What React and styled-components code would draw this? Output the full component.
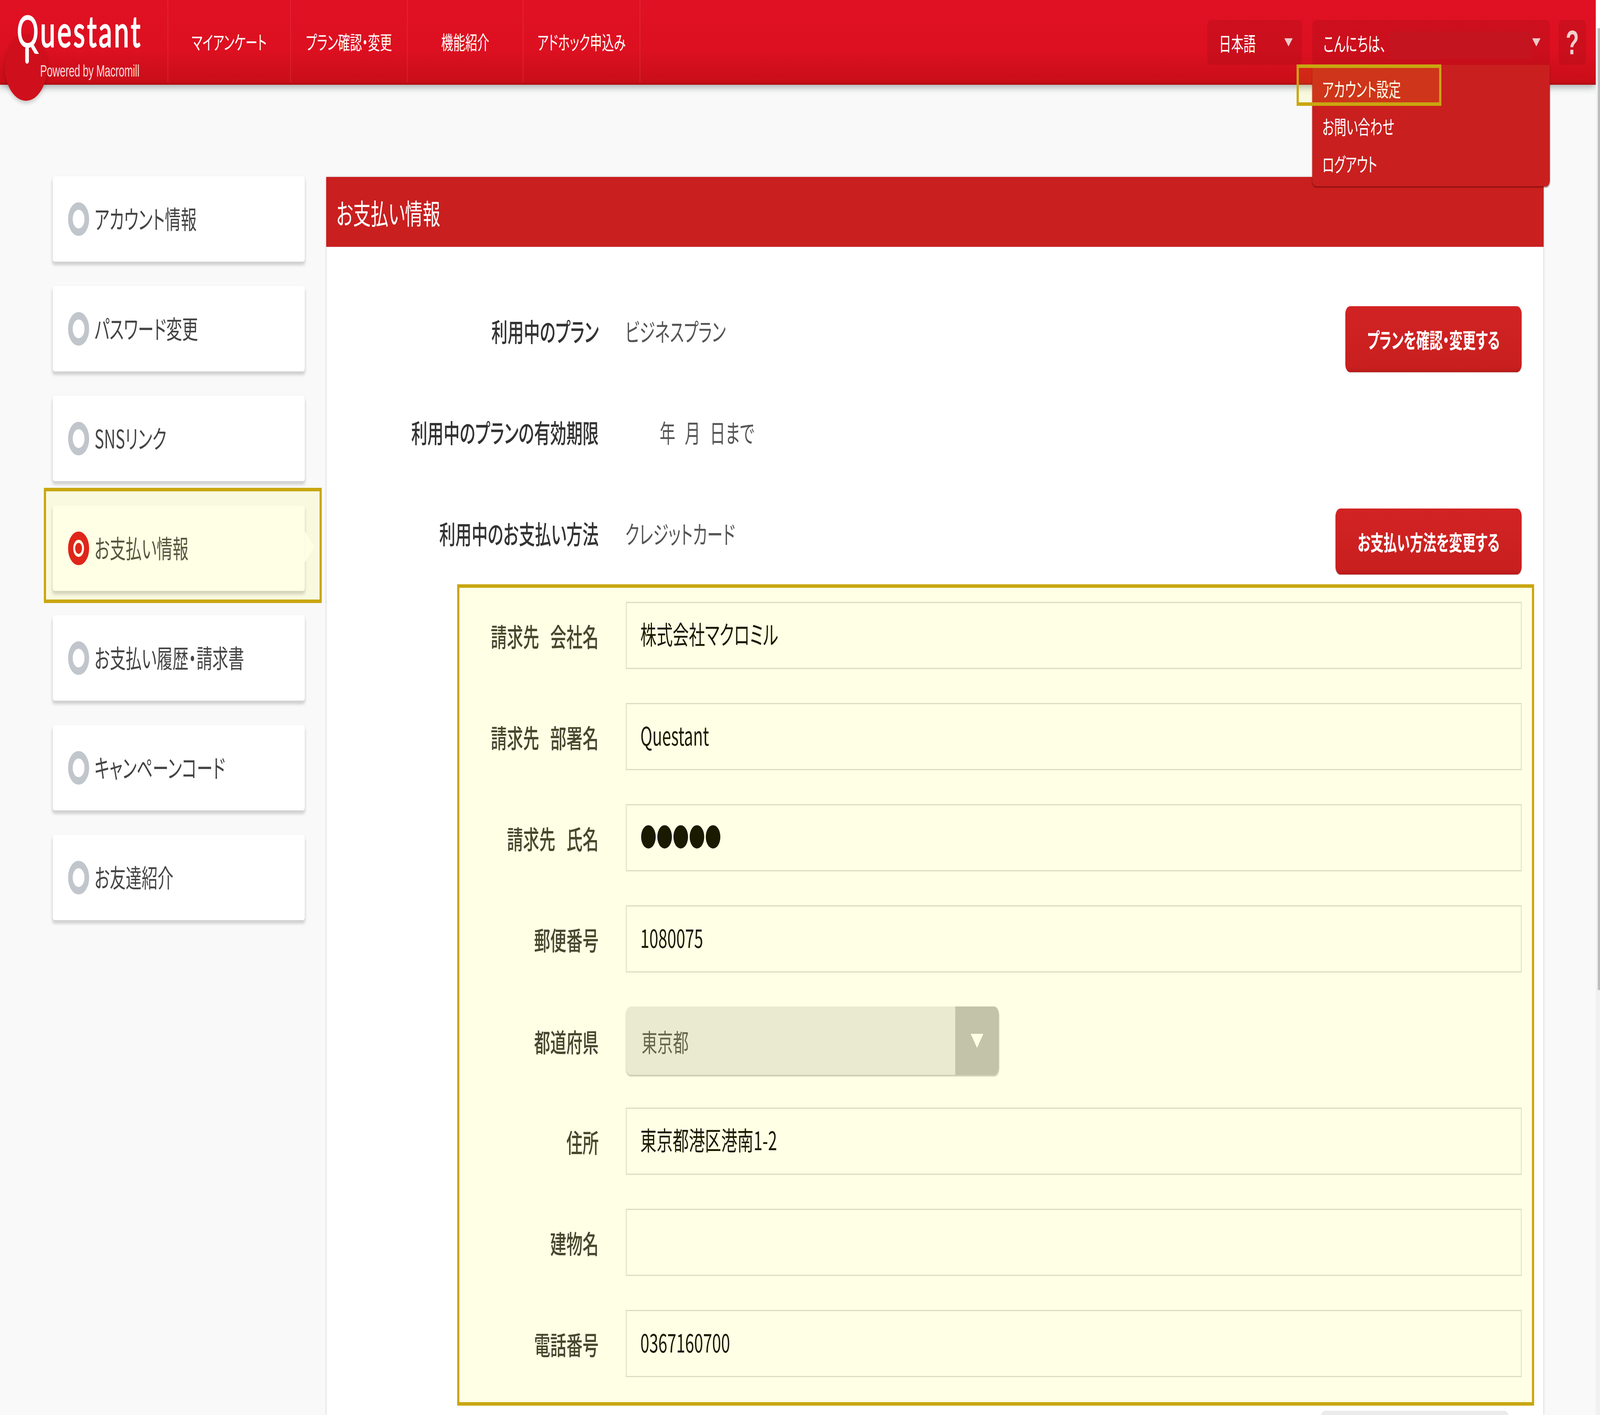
import React from 'react';
import styled, { createGlobalStyle } from 'styled-components';

const cjk = `"Noto Sans CJK JP", "Noto Sans", sans-serif`;
const DESIGN_WIDTH = 6534;

const Global = createGlobalStyle`
  html, body { margin: 0; padding: 0; background: #f9f9f9; overflow: hidden; }
  * { box-sizing: border-box; }
  body { font-family: ${cjk}; font-feature-settings: "palt"; }
`;

const Stage = styled.div`
  width: 100vw;
  height: 100vh;
  overflow: hidden;
`;
// the browser window can come out narrower than the 6534px design, see fitX below
const Screen = styled.div`
  display: flex;
  width: ${DESIGN_WIDTH}px;
  height: 3623px;
  overflow: hidden;
  transform-origin: left top;
`;
const Viewport = styled.div`
  width: 6517px;
  height: 3623px;
  overflow: hidden;
  display: flex;
  flex-direction: column;
`;
const ScrollTrack = styled.div`
  width: 17px;
  background: linear-gradient(#fff 72px, #f1f1f1 72px);
  padding: 72px 0 0 8px;
`;
const ScrollThumb = styled.div`
  height: 2463px;
  background: #bdbdbd;
`;

/* header */
const Header = styled.header`
  position: relative;
  z-index: 5;
  flex: none;
  height: 217px;
  display: flex;
  background: linear-gradient(#e01123, #dc1020 60%, #c90e18 97%, #a90d12);
  box-shadow: 0 6px 22px rgba(60, 70, 70, 0.45);
  &::before {
    content: "";
    position: absolute;
    left: 20px;
    top: 86px;
    width: 172px;
    height: 172px;
    border-radius: 50%;
    background: #cf101c;
    box-shadow: 0 6px 14px rgba(0, 0, 0, 0.2);
    z-index: -1;
  }
`;
const Logo = styled.div`
  width: 684px;
  flex: none;
  padding: 18px 0 0 69px;
  color: #fff;
  position: relative;
`;
const LogoName = styled.div`
  font-family: Lato, sans-serif;
  font-size: 110px;
  line-height: 118px;
  font-weight: 400;
  letter-spacing: 8px;
  -webkit-text-stroke: 3px #fff;
  &::after {
    content: "";
    position: absolute;
    left: 103px;
    top: 118px;
    width: 15px;
    height: 45px;
    background: #fff;
    border-radius: 7px;
  }
`;
const LogoSub = styled.div`
  font-family: "Liberation Sans", Arial, sans-serif;
  font-size: 42px;
  line-height: 44px;
  margin: 24px 0 0 95px;
  letter-spacing: -0.4px;
  color: rgba(255, 255, 255, 0.85);
  white-space: nowrap;
`;
const Nav = styled.nav`
  display: flex;
  border-left: 3px solid rgba(255, 255, 255, 0.1);
  height: 210px;
`;
const NavItem = styled.a`
  width: ${p => p.$w}px;
  display: flex;
  align-items: center;
  justify-content: center;
  color: #fff;
  font-size: 49px;
  border-right: 3px solid rgba(255, 255, 255, 0.1);
  white-space: nowrap;
`;
const HeaderRight = styled.div`
  margin-left: auto;
  display: flex;
  padding: 51px 40px 0 0;
  align-items: flex-start;
`;
const DarkBox = styled.div`
  position: relative;
  height: 115px;
  background: rgba(120, 10, 10, 0.16);
  border-radius: 14px;
  display: flex;
  align-items: center;
  color: #fff;
  font-size: 50px;
  white-space: nowrap;
`;
const LangBox = styled(DarkBox)`
  width: 387px;
  padding: 0 38px 0 48px;
  margin-right: 42px;
`;
const UserBox = styled(DarkBox)`
  width: 970px;
  padding: 0 38px 0 45px;
  margin-right: 36px;
  border-radius: 14px 14px 0 0;
`;
const HelpBox = styled(DarkBox)`
  width: 112px;
  justify-content: center;
  font-family: "Liberation Sans", Arial, sans-serif;
  font-weight: 700;
  font-size: 88px;
  color: #f3cfcf;
`;
const Caret = styled.span`
  margin-left: auto;
  width: 0;
  height: 0;
  border-left: 17px solid transparent;
  border-right: 17px solid transparent;
  border-top: 21px solid #ecc9c9;
`;
const Redacted = styled.span`
  width: 584px;
  height: 69px;
  margin-left: 12px;
  margin-top: 14px;
  background: #c31420;
`;
const Dropdown = styled.ul`
  position: absolute;
  top: 115px;
  left: 0;
  width: 970px;
  margin: 0;
  padding: 12px 0 11px;
  list-style: none;
  background: #c91f1f;
  border-radius: 0 0 16px 16px;
  box-shadow: 0 3px 3px rgba(90, 0, 0, 0.55);
`;
const MenuItem = styled.li`
  height: 96px;
  padding-left: 41px;
  line-height: 96px;
  font-size: 50px;
  color: #fff;
`;
const Highlight = styled.span`
  position: absolute;
  border: 9px solid #c9a711;
  background: rgba(255, 255, 0, 0.1);
  pointer-events: none;
`;
const MenuHighlight = styled(Highlight)`
  left: -64px;
  top: -1px;
  width: 591px;
  height: 106px;
`;

/* page body */
const Content = styled.div`
  flex: 1;
  display: flex;
  min-height: 0;
`;
const Sidebar = styled.aside`
  width: 1334px;
  flex: none;
  padding: 234px 89px 0 215px;
  display: flex;
  flex-direction: column;
  gap: 62px;
`;
const SideItem = styled.div`
  position: relative;
  height: 219px;
  display: flex;
  align-items: center;
  gap: 22px;
  padding: 0 0 6px 63px;
  background: #fff;
  border-radius: 8px;
  box-shadow: 0 9px 9px rgba(0, 0, 0, 0.16), 0 0 3px rgba(0, 0, 0, 0.08);
  font-size: 65px;
  color: #444;
  white-space: nowrap;
`;
const SideArrow = styled.span`
  position: absolute;
  left: 100%;
  top: 66px;
  width: 0;
  height: 0;
  border-top: 40px solid transparent;
  border-bottom: 40px solid transparent;
  border-left: 38px solid #fff;
`;
const SideHighlight = styled(Highlight)`
  inset: -45px -69px -31px -36px;
`;
const Radio = styled.span`
  position: relative;
  flex: none;
  width: 86px;
  height: 86px;
  margin-top: 6px;
  border-radius: 50%;
  border: ${p => (p.$on ? '21px solid #dd0d1e' : '19px solid #c0c6cb')};
  background: #fff;
  &::after {
    content: "";
    display: ${p => (p.$on ? 'block' : 'none')};
    position: absolute;
    left: 8px;
    top: 8px;
    width: 28px;
    height: 28px;
    border-radius: 50%;
    background: #dd0d1e;
  }
`;
const Panel = styled.main`
  width: 4968px;
  flex: none;
  margin-top: 236px;
  background: #fff;
  box-shadow: 0 0 7px rgba(0, 0, 0, 0.18);
`;
const PanelTitle = styled.h1`
  margin: 0 -2px;
  height: 179px;
  padding-left: 41px;
  background: #c91f1f;
  color: #fff;
  font-size: 72px;
  font-weight: 400;
  line-height: 180px;
`;
const InfoList = styled.div`
  padding: 128px 88px 0 0;
  display: flex;
  flex-direction: column;
  gap: 87px;
`;
const InfoRow = styled.div`
  height: 172px;
  display: grid;
  grid-template-columns: 1111px 108px 1fr auto;
  grid-template-rows: 172px;
  align-items: center;
`;
const RowLabel = styled.div`
  text-align: right;
  font-size: 66px;
  font-weight: 500;
  color: #333;
  white-space: pre;
  word-spacing: 30px;
`;
const RowValue = styled.div`
  grid-column: 3;
  font-size: 64px;
  color: #555;
  margin-left: ${p => p.$indent || 0}px;
  word-spacing: 24px;
`;
const RedButton = styled.button`
  grid-column: 4;
  align-self: start;
  margin-top: 24px;
  height: 169px;
  width: ${p => p.$w}px;
  border: 0;
  padding: 0;
  border-radius: 20px;
  background: linear-gradient(#d22323, #c91f1f 92%, #b81a1a);
  box-shadow: 0 1px 2px rgba(0, 0, 0, 0.2);
  color: #fff;
  font-family: ${cjk};
  font-feature-settings: "palt";
  font-size: 54px;
  font-weight: 700;
  white-space: nowrap;
`;
const FormBox = styled.section`
  position: relative;
  margin: 46px 37px 0 533px;
  height: 2103px;
  border: 9px solid #c9a711;
  padding: 36px 42px 0 0;
  display: flex;
  flex-direction: column;
  gap: 87px;
  &::after {
    content: "";
    position: absolute;
    inset: 0;
    background: rgba(255, 255, 0, 0.1);
    pointer-events: none;
  }
`;
const FormRow = styled.div`
  height: 172px;
  display: grid;
  grid-template-columns: 569px 1fr;
  column-gap: 111px;
  align-items: center;
`;
const TextInput = styled.input`
  height: 172px;
  width: 100%;
  padding: 0 0 12px 56px;
  border: 3px solid #d8d8d8;
  border-radius: 0;
  background: #fff;
  color: #000;
  font-family: ${cjk};
  font-feature-settings: "palt";
  font-size: 66px;
  outline: none;
`;
const SelectBox = styled.div`
  height: 175px;
  width: 1523px;
  display: flex;
  align-items: center;
  justify-content: space-between;
  padding-left: 64px;
  border-radius: 20px;
  overflow: hidden;
  background: #e8e8e8;
  box-shadow: 0 4px 3px rgba(0, 0, 0, 0.22);
  color: #555;
  font-size: 64px;
`;
const SelectArrow = styled.span`
  width: 178px;
  height: 100%;
  background: #bdbdbd;
  display: flex;
  align-items: center;
  justify-content: center;
  &::before {
    content: "";
    border-left: 26px solid transparent;
    border-right: 26px solid transparent;
    border-top: 36px solid #fff;
  }
`;
const CutButton = styled.div`
  margin: 13px 138px 0 auto;
  width: 773px;
  height: 100px;
  background: #ebebeb;
  border-radius: 22px 22px 0 0;
`;

const navs = [
  ['マイアンケート', 501],
  ['プラン確認・変更', 477],
  ['機能紹介', 473],
  ['アドホック申込み', 477],
];
const sides = ['アカウント情報', 'パスワード変更', 'SNSリンク', 'お支払い情報', 'お支払い履歴・請求書', 'キャンペーンコード', 'お友達紹介'];
const fields = [
  ['請求先 会社名', '株式会社マクロミル'],
  ['請求先 部署名', 'Questant'],
  ['請求先 氏名', '●●●●●'],
  ['郵便番号', '1080075'],
  ['都道府県', null],
  ['住所', '東京都港区港南1-2'],
  ['建物名', ''],
  ['電話番号', '0367160700'],
];

export default function App() {
  // the sandbox window tops out at 4096px wide, so squeeze the design to whatever width we really got
  const fitX = Math.min(1, window.innerWidth / DESIGN_WIDTH);
  return (
    <Stage>
      <Global />
      <Screen style={{ transform: `scaleX(${fitX})` }}>
        <Viewport>
          <Header>
            <Logo>
              <LogoName>Questant</LogoName>
              <LogoSub>Powered by Macromill</LogoSub>
            </Logo>
            <Nav>
              {navs.map(([t, w]) => <NavItem key={t} $w={w}>{t}</NavItem>)}
            </Nav>
            <HeaderRight>
              <LangBox>日本語<Caret /></LangBox>
              <UserBox>
                こんにちは、<Redacted /><Caret />
                <Dropdown>
                  <MenuItem>アカウント設定</MenuItem>
                  <MenuItem>お問い合わせ</MenuItem>
                  <MenuItem>ログアウト</MenuItem>
                  <MenuHighlight />
                </Dropdown>
              </UserBox>
              <HelpBox>?</HelpBox>
            </HeaderRight>
          </Header>
          <Content>
            <Sidebar>
              {sides.map((s, i) => (
                <SideItem key={s}>
                  <Radio $on={i === 3} />
                  {s}
                  {i === 3 && <SideArrow />}
                  {i === 3 && <SideHighlight />}
                </SideItem>
              ))}
            </Sidebar>
            <Panel>
              <PanelTitle>お支払い情報</PanelTitle>
              <InfoList>
                <InfoRow>
                  <RowLabel>利用中のプラン</RowLabel>
                  <RowValue>ビジネスプラン</RowValue>
                  <RedButton $w={720}>プランを確認・変更する</RedButton>
                </InfoRow>
                <InfoRow>
                  <RowLabel>利用中のプランの有効期限</RowLabel>
                  <RowValue $indent={141}>年 月 日まで</RowValue>
                </InfoRow>
                <InfoRow>
                  <RowLabel>利用中のお支払い方法</RowLabel>
                  <RowValue>クレジットカード</RowValue>
                  <RedButton $w={760}>お支払い方法を変更する</RedButton>
                </InfoRow>
              </InfoList>
              <FormBox>
                {fields.map(([label, value]) => (
                  <FormRow key={label}>
                    <RowLabel>{label}</RowLabel>
                    {value === null
                      ? <SelectBox>東京都<SelectArrow /></SelectBox>
                      : <TextInput readOnly value={value} />}
                  </FormRow>
                ))}
              </FormBox>
              <CutButton />
            </Panel>
          </Content>
        </Viewport>
        <ScrollTrack><ScrollThumb /></ScrollTrack>
      </Screen>
    </Stage>
  );
}
